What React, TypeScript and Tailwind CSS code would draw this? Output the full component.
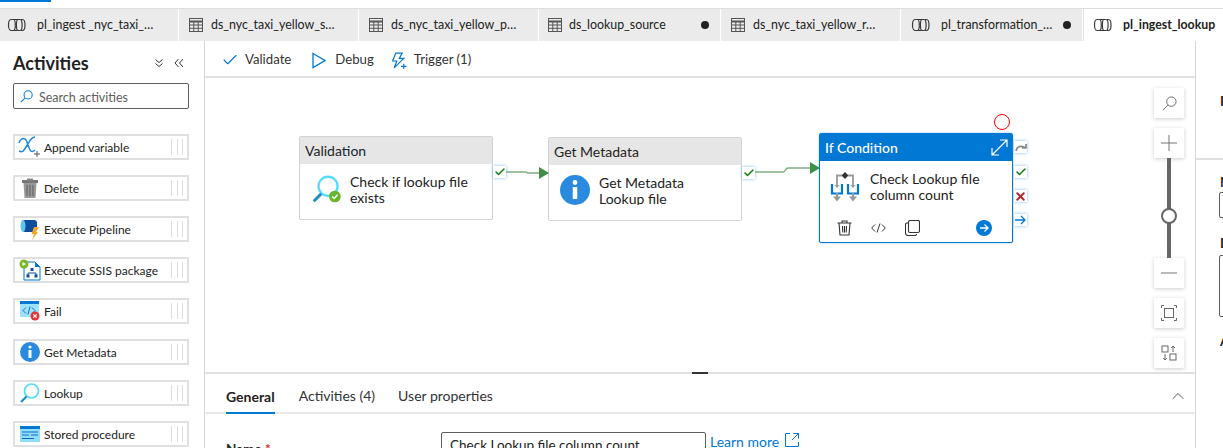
import { ReactNode } from "react";
import { Check, ChevronUp, X } from "lucide-react";

const font = { fontFamily: 'Lato, "Noto Sans", sans-serif' };

function PipelineIcon() {
  return (
    <svg width="20" height="16" viewBox="0 0 20 16" fill="none" stroke="#3a3a3a" strokeWidth="1.2">
      <path d="M4 2.500h2.500c1.200 0 1.800 2.500 1.800 5.500s-.6 5.500-1.800 5.500H4C2.500 13.500 1.500 11 1.500 8S2.500 2.500 4 2.500z" />
      <path d="M6.500 2.500h7M6.500 13.500h7" />
      <path d="M11 2.500c-1 0-1.600 2.500-1.600 5.500s.6 5.500 1.600 5.500" />
      <path d="M13.500 2.500h2c1.500 0 2.500 2.500 2.500 5.500s-1 5.500-2.500 5.500h-2c1-.5 1.600-2.500 1.600-5.500s-.6-5-1.600-5.500z" />
    </svg>
  );
}

function TableIcon() {
  return (
    <svg width="14" height="14" viewBox="0 0 14 14" fill="none" stroke="#555" strokeWidth="1">
      <rect x="0.5" y="0.5" width="13" height="13" />
      <path d="M0.500 3.500h13" strokeWidth="2" />
      <path d="M0.500 7h13M0.500 10.300h13M4.800 3v10.500M9.200 3v10.500" />
    </svg>
  );
}

function SearchGlyph({ size, color, width = 1 }: { size: number; color: string; width?: number }) {
  return (
    <svg width={size} height={size} viewBox="0 0 16 16" fill="none" stroke={color} strokeWidth={width}>
      <circle cx="10" cy="6" r="5" />
      <path d="M6.300 9.700L1 15" />
    </svg>
  );
}

function Tab({ name, icon, dirty, active, width, iconClass }: { name: string; icon: ReactNode; dirty?: boolean; active?: boolean; width: string; iconClass: string }) {
  return (
    <div className={`flex items-center h-full border-r border-white ${width} ${active ? "bg-white font-bold flex-1 border-l border-l-[#dedede]" : ""}`}>
      <span className={`flex shrink-0 ${iconClass}`}>{icon}</span>
      <span className={`${active ? "text-[12.300px]" : "text-[12.400px]"} text-[#222] whitespace-nowrap`}>{name}</span>
      {dirty && <span className="ml-auto mr-[11px] w-[8px] h-[8px] rounded-full bg-[#222]" />}
    </div>
  );
}

function Grip() {
  return (
    <div className="ml-auto mr-[4px] flex gap-[4.500px] h-[16px]">
      <span className="w-px h-full bg-[#ddd]" />
      <span className="w-px h-full bg-[#ddd]" />
      <span className="w-px h-full bg-[#ddd]" />
    </div>
  );
}

function SideItem({ label, icon }: { label: string; icon: ReactNode }) {
  return (
    <div className="flex items-center h-[26px] mb-[15px] border-2 border-[#e0e0e0] bg-white">
      <span className="w-[29px] h-[22px] flex items-center justify-center shrink-0">{icon}</span>
      <span className="text-[12px] pt-[2px] text-[#222] whitespace-nowrap">{label}</span>
      <Grip />
    </div>
  );
}

function AppendIcon() {
  return (
    <svg width="24" height="22" viewBox="0 0 24 22" fill="none">
      <path d="M1 7c1-4 4-5 6-4 2 1 3 7 5 11 1 2 3 2 5 0M17 1c-3 0-5 3-7 7l-4 6c-1 2-3 2-5 1" stroke="#1e88e5" strokeWidth="1.500" />
      <path d="M19 15v6M16 18h6" stroke="#555" strokeWidth="1" />
    </svg>
  );
}

function TrashFilled() {
  return (
    <svg width="18" height="21" viewBox="0 0 18 21">
      <rect x="1" y="2" width="16" height="3" fill="#777" />
      <rect x="6" y="0.500" width="6" height="2" fill="#888" />
      <path d="M2.500 5h13l-1 15h-11z" fill="#999" />
      <path d="M6 7v11M9 7v11M12 7v11" stroke="#666" strokeWidth="1.200" />
    </svg>
  );
}

function ExecPipelineIcon() {
  return (
    <svg width="22" height="22" viewBox="0 0 22 22">
      <rect x="3" y="2" width="15" height="12" rx="3" fill="#0f4c9c" />
      <ellipse cx="4" cy="8" rx="2.500" ry="6" fill="#5ac8f0" />
      <path d="M15 9l5 0-3 5 2 0-6 8 2-6-2.500 0z" fill="#f5a623" />
    </svg>
  );
}

function SsisIcon() {
  return (
    <svg width="22" height="22" viewBox="0 0 22 22">
      <path d="M5 3h11l5 5v13H5z" fill="#fff" stroke="#0078d4" strokeWidth="1" />
      <path d="M16 3l5 5h-5z" fill="#0078d4" />
      <circle cx="5" cy="5" r="4.500" fill="#7ab829" />
      <path d="M3.500 3l3.500 2-3.500 2z" fill="#fff" />
      <path d="M13 10v2M9 16v-2h8v2" fill="none" stroke="#0f4c9c" />
      <rect x="11.500" y="9" width="3" height="3" fill="#0f4c9c" />
      <rect x="7.500" y="15.500" width="3" height="3" fill="#0f4c9c" />
      <rect x="15.500" y="15.500" width="3" height="3" fill="#0f4c9c" />
    </svg>
  );
}

function FailIcon() {
  return (
    <svg width="22" height="22" viewBox="0 0 22 22">
      <rect x="1" y="3" width="19" height="14" fill="#9fe3fb" />
      <rect x="1" y="1" width="19" height="3" fill="#0078d4" />
      <path d="M7 7.500l-3 3 3 3M13 7.500l3 3-3 3M11 6.500l-2 8" fill="none" stroke="#0f6cbd" strokeWidth="1" />
      <circle cx="16" cy="16" r="4.500" fill="#e5383b" />
      <path d="M14.300 14.300l3.400 3.400M17.700 14.300l-3.400 3.400" stroke="#fff" strokeWidth="1.200" />
    </svg>
  );
}

function InfoIcon({ size = 20 }: { size?: number }) {
  return (
    <svg width={size} height={size} viewBox="0 0 20 20">
      <circle cx="10" cy="10" r="10" fill="#2a8ae0" />
      <circle cx="10" cy="5" r="1.600" fill="#fff" />
      <rect x="8.500" y="8" width="3" height="8" fill="#fff" />
    </svg>
  );
}

function LookupIcon({ size = 22, ok }: { size?: number; ok?: boolean }) {
  return (
    <svg width={size} height={size} viewBox="0 0 22 22" fill="none">
      <circle cx="12.500" cy="9" r="7" stroke="#55dcfb" strokeWidth="1.700" />
      <path d="M7.500 14.500L2 20" stroke="#1c8cc0" strokeWidth="2.200" />
      {ok && <circle cx="17.500" cy="16.500" r="4.300" fill="#6ab42d" />}
      {ok && <path d="M15.500 16.500l1.500 1.500 2.500-2.800" stroke="#fff" strokeWidth="1" />}
    </svg>
  );
}

function StoredIcon() {
  return (
    <svg width="20" height="20" viewBox="0 0 20 20">
      <rect x="0" y="3" width="20" height="15" fill="#8fdcfb" />
      <rect x="0" y="2" width="20" height="3" fill="#0078d4" />
      <path d="M2 8h16M2 11h7M11 11h7M2 14.500h12" stroke="#0f6cbd" strokeWidth="1.200" />
    </svg>
  );
}

function IfIcon() {
  return (
    <svg width="30" height="31" viewBox="0 0 30 31" fill="none">
      <path d="M15 1l3.500 3.500L15 8l-3.500-3.500z" fill="#333" />
      <path d="M12 4.500H7V16M18 4.500h5V16" stroke="#999" strokeWidth="1.800" />
      <path d="M2 13v9.500h10V13M18 13v9.500h10V13" stroke="#0078d4" strokeWidth="2.200" />
      <path d="M7 22v5M23 22v5" stroke="#999" strokeWidth="2.200" />
      <path d="M3 25.500l4 5 4-5zM19 25.500l4 5 4-5z" fill="#999" />
      <path d="M4.500 14L7 17l2.500-3zM20.500 14l2.500 3 2.500-3z" fill="#999" />
    </svg>
  );
}

function Chip({ children, className = "" }: { children: ReactNode; className?: string }) {
  return (
    <div className={`absolute w-[13px] h-[12px] bg-white flex items-center justify-center shadow-[0_0_3px_#7fb5e6] ${className}`}>
      {children}
    </div>
  );
}

function Node({ title, line1, line2, icon, className }: { title: string; line1: string; line2: string; icon: ReactNode; className: string }) {
  return (
    <div className={`absolute w-[194px] h-[84px] bg-white border border-[#d2d2d2] rounded-[2px] overflow-hidden ${className}`}>
      <div className="h-[27px] bg-[#e6e6e6] px-[5px] flex items-center text-[14px] text-[#222]">{title}</div>
      <div className="flex mt-[10px]">
        <span className="w-[50px] flex justify-center pl-[2px] shrink-0">{icon}</span>
        <div className="text-[14px] leading-[16px] text-[#222] h-[30px] overflow-hidden">
          <div>{line1}</div>
          <div>{line2}</div>
        </div>
      </div>
    </div>
  );
}

function ZoomButton({ children, className = "" }: { children: ReactNode; className?: string }) {
  return (
    <div className={`w-[30px] h-[30px] bg-white flex items-center justify-center shadow-[0_1px_4px_rgba(0,0,0,0.2)] ${className}`}>
      {children}
    </div>
  );
}

export default function App() {
  return (
    <div style={font} className="w-[1223px] h-[448px] overflow-hidden bg-white flex flex-col">
      <div className="h-[9px] shrink-0 border-b border-[#dedede]">
        <div className="w-[51px] h-[2px] bg-[#0078d4]" />
      </div>
      <div className="h-[32px] shrink-0 flex bg-[#ebebeb]">
        <Tab width="w-[179px]" iconClass="pl-[7px] pr-[10px]" name="pl_ingest _nyc_taxi_…" icon={<PipelineIcon />} />
        <Tab width="w-[180px]" iconClass="pl-[10px] pr-[8px]" name="ds_nyc_taxi_yellow_s…" icon={<TableIcon />} />
        <Tab width="w-[180px]" iconClass="pl-[10px] pr-[8px]" name="ds_nyc_taxi_yellow_p…" icon={<TableIcon />} />
        <Tab width="w-[182px]" iconClass="pl-[9px] pr-[7px]" name="ds_lookup_source" icon={<TableIcon />} dirty />
        <Tab width="w-[180px]" iconClass="pl-[10px] pr-[8px]" name="ds_nyc_taxi_yellow_r…" icon={<TableIcon />} />
        <Tab width="w-[182px]" iconClass="pl-[10px] pr-[10px]" name="pl_transformation_…" icon={<PipelineIcon />} dirty />
        <Tab width="" iconClass="pl-[9px] pr-[10px]" name="pl_ingest_lookup" icon={<PipelineIcon />} active />
      </div>

      <div className="flex flex-1 min-h-0">
        <aside className="w-[205px] shrink-0 border-r border-[#d6d6d6] pl-[13px] pr-[15px] overflow-hidden">
          <div className="flex items-center h-[42px] pt-[2px]">
            <span className="text-[18px] font-bold text-[#222]">Activities</span>
            <svg className="ml-auto" width="10" height="10" viewBox="0 0 10 10" fill="none" stroke="#333" strokeWidth="1">
              <path d="M1.500 1.500L5 4.500l3.500-3M1.500 5.500L5 8.500l3.500-3" />
            </svg>
            <svg className="ml-[10px] mr-[5px]" width="10" height="10" viewBox="0 0 10 10" fill="none" stroke="#333" strokeWidth="1">
              <path d="M4.500 1L1 5l3.500 4M9 1L5.500 5 9 9" />
            </svg>
          </div>
          <div className="h-[26px] border border-[#605e5c] rounded-[2px] flex items-center pl-[6px] gap-[6px]">
            <SearchGlyph size={13} color="#0078d4" width={1.300} />
            <span className="text-[12.500px] text-[#605e5c] pt-[4px]">Search activities</span>
          </div>
          <div className="mt-[25px]">
            <SideItem label="Append variable" icon={<AppendIcon />} />
            <SideItem label="Delete" icon={<TrashFilled />} />
            <SideItem label="Execute Pipeline" icon={<ExecPipelineIcon />} />
            <SideItem label="Execute SSIS package" icon={<SsisIcon />} />
            <SideItem label="Fail" icon={<FailIcon />} />
            <SideItem label="Get Metadata" icon={<InfoIcon />} />
            <SideItem label="Lookup" icon={<LookupIcon />} />
            <SideItem label="Stored procedure" icon={<StoredIcon />} />
          </div>
        </aside>

        <main className="flex-1 min-w-0 flex flex-col">
          <div className="h-[37px] shrink-0 border-b-2 border-[#e0e0e0] flex items-center pl-[16px] pt-[3px] text-[13.200px] text-[#333]">
            <Check size={18} strokeWidth={1.500} className="text-[#0078d4]" />
            <span className="ml-[6px]">Validate</span>
            <svg className="ml-[21px]" width="14" height="17" viewBox="0 0 14 17" fill="none" stroke="#0078d4" strokeWidth="1.300">
              <path d="M1 1.500L13 8.500 1 15.500z" />
            </svg>
            <span className="ml-[9px]">Debug</span>
            <svg className="ml-[17px]" width="17" height="17" viewBox="0 0 16 16" fill="none" stroke="#0078d4" strokeWidth="1.100">
              <path d="M4.500 1h6L7.800 6H12L3 15l2.500-6.500H1.500zM12 11v5M9.500 13.500h5" />
            </svg>
            <span className="ml-[6px]">Trigger (1)</span>
          </div>

          <div className="relative flex-1 min-h-0 overflow-hidden">
            <Node
              className="left-[94px] top-[58px]"
              title="Validation"
              line1="Check if lookup file"
              line2="exists"
              icon={<LookupIcon size={30} ok />}
            />
            <Chip className="left-[288px] top-[88px]"><Check size={12} strokeWidth={3} className="text-[#107c10]" /></Chip>
            <Node
              className="left-[343px] top-[59px]"
              title="Get Metadata"
              line1="Get Metadata"
              line2="Lookup file"
              icon={<InfoIcon size={30} />}
            />
            <Chip className="left-[537px] top-[89px]"><Check size={12} strokeWidth={3} className="text-[#107c10]" /></Chip>

            <svg className="absolute left-[301px] top-[84px]" width="320" height="20" viewBox="0 0 320 20" fill="none">
              <path d="M0 10h20l2 1h20" stroke="#7fae82" strokeWidth="1.500" />
              <path d="M33 5l10 6-10 6z" fill="#3f8f46" />
              <path d="M249 10h28c3 0 2-4 5-4h23" stroke="#7fae82" strokeWidth="1.500" />
              <path d="M304 0l10 6-10 6z" fill="#3f8f46" />
            </svg>

            <div className="absolute left-[614px] top-[55px] w-[194px] h-[110px] bg-white border border-[#0078d4] rounded-[2px] overflow-hidden shadow-[0_0_2px_rgba(0,120,212,0.5)]">
              <div className="h-[27px] bg-[#0078d4] pl-[5px] pr-[4px] flex items-center text-[14px] font-medium text-white">
                If Condition
                <svg className="ml-auto" width="17" height="17" viewBox="0 0 17 17" fill="none" stroke="#fff" strokeWidth="1.200">
                  <path d="M1 16L16 1M9 1h7v7M1 9v7h7" />
                </svg>
              </div>
              <div className="flex mt-[10px] h-[32px]">
                <span className="w-[50px] flex justify-center shrink-0"><IfIcon /></span>
                <div className="text-[14px] leading-[16px] text-[#222]">
                  <div>Check Lookup file</div>
                  <div>column count</div>
                </div>
              </div>
              <div className="flex items-center mt-[17px] pl-[17px] pr-[20px]">
                <svg width="15" height="16" viewBox="0 0 15 16" fill="none" stroke="#333" strokeWidth="1.100">
                  <path d="M0.500 3h14M5 3V1h5v2M2 3l1 12h9l1-12M5.500 6l.3 6.500M7.500 6v6.500M9.500 6l-.3 6.500" />
                </svg>
                <svg className="ml-[19px]" width="15" height="10" viewBox="0 0 15 10" fill="none" stroke="#333" strokeWidth="1">
                  <path d="M4 1.500L0.700 5 4 8.500M11 1.500L14.300 5 11 8.500M9 0.500L6 9.500" />
                </svg>
                <svg className="ml-[19px]" width="15" height="16" viewBox="0 0 15 16" fill="none" stroke="#333" strokeWidth="1.100">
                  <rect x="3.500" y="0.500" width="11" height="12" rx="1.500" />
                  <path d="M3.500 3H2C1 3 .5 3.500 .5 4.500V13c0 1.500 1 2.500 2.500 2.500h7c1 0 1.500-.5 1.500-1.500" />
                </svg>
                <span className="ml-auto w-[16px] h-[16px] rounded-full bg-[#0078d4] flex items-center justify-center">
                  <svg width="10" height="10" viewBox="0 0 10 10" fill="none" stroke="#fff" strokeWidth="1.300">
                    <path d="M1 5h8M5.500 1.500L9 5 5.500 8.500" />
                  </svg>
                </span>
              </div>
            </div>

            <div className="absolute left-[789px] top-[36px] w-[16px] h-[16px] rounded-full border border-[#f00]" />

            <Chip className="left-[809px] top-[63px]">
              <svg width="12" height="9" viewBox="0 0 12 9" fill="none" stroke="#888" strokeWidth="1.700">
                <path d="M1 8C2 3 6 2 11 5M11 1v4H7" />
              </svg>
            </Chip>
            <Chip className="left-[809px] top-[88px]"><Check size={12} strokeWidth={3} className="text-[#107c10]" /></Chip>
            <Chip className="left-[809px] top-[112px]"><X size={13} strokeWidth={3.500} className="text-[#b3262b]" /></Chip>
            <Chip className="left-[809px] top-[136px]">
              <svg width="11" height="10" viewBox="0 0 11 10" fill="none" stroke="#0078d4" strokeWidth="1.300">
                <path d="M0 5h10M6 1l4 4-4 4" />
              </svg>
            </Chip>

            <div className="absolute left-[949px] top-[10px] flex flex-col items-center">
              <ZoomButton>
                <SearchGlyph size={15} color="#666" />
              </ZoomButton>
              <ZoomButton className="mt-[10px]">
                <svg width="16" height="16" viewBox="0 0 16 16" stroke="#777" strokeWidth="1"><path d="M8 0v16M0 8h16" /></svg>
              </ZoomButton>
              <div className="relative w-[4px] h-[100px] bg-[#666]">
                <span className="absolute left-[-6px] top-[50px] w-[16px] h-[16px] rounded-full bg-white border-2 border-[#666]" />
              </div>
              <ZoomButton>
                <svg width="16" height="2" viewBox="0 0 16 2" stroke="#777" strokeWidth="1"><path d="M0 1h16" /></svg>
              </ZoomButton>
              <ZoomButton className="mt-[10px]">
                <svg width="16" height="16" viewBox="0 0 16 16" fill="none" stroke="#666" strokeWidth="1">
                  <rect x="3.500" y="3.500" width="9" height="9" />
                  <path d="M.5 3V.5H3M13 .5h2.500V3M15.500 13v2.500H13M3 15.500H.5V13" />
                </svg>
              </ZoomButton>
              <ZoomButton className="mt-[10px]">
                <svg width="16" height="16" viewBox="0 0 16 16" fill="none" stroke="#666" strokeWidth="1">
                  <rect x="1" y="1" width="6" height="6" />
                  <rect x="9" y="9" width="6" height="6" />
                  <path d="M12 7V1M10 3l2-2 2 2M4 9v6M2 13l2 2 2-2" />
                </svg>
              </ZoomButton>
            </div>
          </div>

          <div className="relative h-[2px] shrink-0 bg-[#e0e0e0]">
            <span className="absolute left-[487px] top-0 w-[16px] h-[2px] bg-[#333]" />
          </div>

          <div className="h-[74px] shrink-0 overflow-hidden">
            <div className="h-[40px] border-b-2 border-[#e8e8e8] flex items-end pl-[21px] text-[14px] text-[#333] relative">
              <span className="h-[40px] pt-[6px] flex items-center border-b-2 border-[#0078d4] -mb-[2px] font-bold text-[#222]">General</span>
              <span className="h-[40px] pt-[6px] flex items-center ml-[24px]">Activities (4)</span>
              <span className="h-[40px] pt-[6px] flex items-center ml-[23px]">User properties</span>
              <ChevronUp size={20} strokeWidth={1} className="absolute right-[7px] top-[12px] text-[#333]" />
            </div>
            <div className="flex pl-[21px]">
              <span className="w-[215px] mt-[25px] text-[13.500px] font-bold text-[#222]">Name <span className="text-[#d13438]">*</span></span>
              <div className="mt-[18px] w-[265px] h-[30px] border border-[#605e5c] rounded-[2px] pl-[8px] text-[13.500px] leading-[25px] text-[#222]">
                Check Lookup file column count
              </div>
              <span className="ml-[4px] mt-[17px] text-[14px] text-[#0078d4]">Learn more</span>
              <svg className="ml-[6px] mt-[19px]" width="14" height="14" viewBox="0 0 14 14" fill="none" stroke="#0078d4" strokeWidth="1">
                <path d="M5 .5H.5v13h13V9M8.500 .5h5v5M13.500 .5L7 7" />
              </svg>
            </div>
          </div>
        </main>

        <aside className="w-[28px] shrink-0 border-l border-[#d6d6d6] overflow-hidden text-[13.500px] font-bold text-[#222]">
          <div className="h-[119px] pt-[50px] pl-[24px] border-b-2 border-[#e0e0e0]">F</div>
          <div className="pl-[24px] mt-[13px] leading-[18px]">N</div>
          <div className="ml-[23px] mt-[1px] w-[20px] h-[26px] border border-[#605e5c] rounded-[2px]" />
          <div className="pl-[24px] mt-[16px] leading-[18px]">D</div>
          <div className="ml-[23px] mt-[3px] w-[20px] h-[62px] border border-[#605e5c] rounded-[2px]" />
          <div className="pl-[24px] mt-[15px] leading-[18px]">A</div>
        </aside>
      </div>
    </div>
  );
}
